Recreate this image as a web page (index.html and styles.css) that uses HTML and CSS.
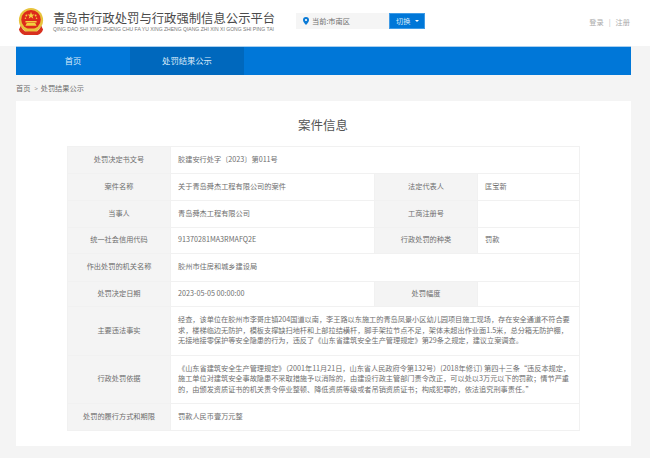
FILE: index.html
```html
<!DOCTYPE html>
<html lang="zh-CN">
<head>
<meta charset="utf-8">
<title>案件信息</title>
<link rel="stylesheet" href="styles.css">
</head>
<body>
<header class="header">
  <div class="brand">
    <svg class="emblem" viewBox="0 0 28 30" width="26" height="28">
      <circle cx="14" cy="13" r="13" fill="#e8c33c"/>
      <circle cx="14" cy="12.5" r="10.5" fill="#dd2a1b"/>
      <path d="M14 4l1 2.8h3l-2.4 1.8.9 2.9L14 9.7l-2.500 1.800.9-2.900L10 6.800h3z" fill="#f3d13f"/>
      <circle cx="9" cy="8" r="1" fill="#f3d13f"/><circle cx="19" cy="8" r="1" fill="#f3d13f"/>
      <circle cx="8" cy="11" r=".8" fill="#f3d13f"/><circle cx="20" cy="11" r=".8" fill="#f3d13f"/>
      <path d="M8 14h12v1.500H8zM9.500 16h9l1.500 3H8z" fill="#f3d13f"/>
      <path d="M3 19c1 3 3 5 5 6h12c2-1 4-3 5-6l2 4c-1 3-3 5-6 6H7c-3-1-5-3-6-6z" fill="#d8301f"/>
      <path d="M7 22h14v3H7z" fill="#e8c33c"/>
    </svg>
    <div class="brand-text">
      <div class="brand-name">青岛市行政处罚与行政强制信息公示平台</div>
      <div class="brand-pinyin">QING DAO SHI XING ZHENG CHU FA YU XING ZHENG QIANG ZHI XIN XI GONG SHI PING TAI</div>
    </div>
  </div>
  <div class="region">
    <div class="region-box">
      <svg class="pin" viewBox="0 0 6 8" width="6" height="8"><path d="M3 0a3 3 0 0 1 3 3c0 2-3 5-3 5S0 5 0 3a3 3 0 0 1 3-3z" fill="#0a7ad6"/><circle cx="3" cy="3" r="1.100" fill="#fff"/></svg>
      <span>当前:市南区</span>
    </div>
    <button class="switch">切换<i class="caret"></i></button>
  </div>
  <div class="auth"><span>登录</span><i class="sep">|</i><span>注册</span></div>
</header>
<nav class="nav">
  <a class="nav-item">首页</a>
  <a class="nav-item active">处罚结果公示</a>
</nav>
<div class="crumb"><span>首页</span><span class="gt">&gt;</span><span>处罚结果公示</span></div>
<main class="card">
  <h1 class="title">案件信息</h1>
  <table class="info">
    <colgroup><col class="c1"><col class="c2"><col class="c3"><col class="c4"></colgroup>
    <tr class="r27"><th>处罚决定书文号</th><td colspan="3">胶建安行处字〔2023〕第011号</td></tr>
    <tr class="r27"><th>案件名称</th><td>关于青岛舜杰工程有限公司的案件</td><th>法定代表人</th><td>匡宝新</td></tr>
    <tr class="r27"><th>当事人</th><td>青岛舜杰工程有限公司</td><th>工商注册号</th><td></td></tr>
    <tr class="r26"><th>统一社会信用代码</th><td>91370281MA3RMAFQ2E</td><th>行政处罚的种类</th><td>罚款</td></tr>
    <tr class="r28"><th>作出处罚的机关名称</th><td colspan="3">胶州市住房和城乡建设局</td></tr>
    <tr class="r25"><th>处罚决定日期</th><td>2023-05-05 00:00:00</td><th>处罚幅度</th><td></td></tr>
    <tr class="r49"><th>主要违法事实</th><td colspan="3" class="long">经查，该单位在胶州市李哥庄镇204国道以南，李王路以东施工的青岛凤景小区幼儿园项目施工现场，存在安全通道不符合要<br>求，楼梯临边无防护，模板支撑缺扫地杆和上部拉结横杆，脚手架拉节点不足，架体未超出作业面1.5米，总分箱无防护棚，<br>无接地接零保护等安全隐患的行为，违反了《山东省建筑安全生产管理规定》第29条之规定，建议立案调查。</td></tr>
    <tr class="r48"><th>行政处罚依据</th><td colspan="3" class="long">《山东省建筑安全生产管理规定》（2001年11月21日，山东省人民政府令第132号）(2018年修订) 第四十三条“违反本规定，<br>施工单位对建筑安全事故隐患不采取措施予以消除的，由建设行政主管部门责令改正，可以处以3万元以下的罚款；情节严重<br>的，由颁发资质证书的机关责令停业整顿、降低资质等级或者吊销资质证书；构成犯罪的，依法追究刑事责任。”</td></tr>
    <tr class="r27"><th>处罚的履行方式和期限</th><td colspan="3">罚款人民币壹万元整</td></tr>
  </table>
</main>
</body>
</html>
```
FILE: styles.css
```css
* { box-sizing: border-box; }
html, body { margin: 0; padding: 0; }
body {
  width: 650px;
  height: 458px;
  overflow: hidden;
  background: #f4f4f4;
  font-family: "Noto Sans CJK SC", "Liberation Sans", sans-serif;
  color: #6e6e6e;
}
.header {
  height: 46px;
  background: #fff;
  display: flex;
  align-items: flex-start;
  padding: 0 20px 0 18px;
}
.brand { display: flex; align-items: center; gap: 9px; width: 278px; padding-top: 8px; }
.emblem { flex: none; }
.brand-name { font-size: 12.35px; line-height: 15px; color: #4a4a4a; white-space: nowrap; }
.brand-pinyin { font-size: 5.05px; line-height: 7px; color: #777; white-space: nowrap; font-family: "Liberation Sans", sans-serif; }
.region { display: flex; margin-top: 13px; }
.region-box {
  width: 93px; height: 16px; background: #f5f5f5;
  display: flex; align-items: center; gap: 3px; padding-left: 7px;
  font-size: 7.2px; color: #6e6e6e;
}
.switch {
  width: 36px; height: 16px; padding: 0 0 0 6px; margin: 0;
  background: #0077d8; border: 1px solid #3f9be6; color: #dcecfa;
  font-family: inherit; font-size: 7.2px; line-height: 14px;
  display: flex; align-items: center; gap: 5px;
}
.caret { width: 0; height: 0; border: 2px solid transparent; border-top: 2px solid #fff; border-bottom: 0; }
.auth { display: flex; margin-left: auto; margin-top: 17px; font-size: 7.2px; line-height: 10px; color: #aaa; gap: 5px; }
.sep { font-style: normal; color: #bbb; }
.nav {
  margin: 0 19px 0 16px; height: 29px;
  background: #0077d8; border-top: 1px solid #a9cfef;
  display: flex;
}
.nav-item { width: 114px; text-align: center; color: #dcecfa; font-size: 8.3px; line-height: 27px; }
.nav-item.active { background: #0068bd; }
.crumb {
  margin-left: 16px; height: 26px; display: flex; align-items: center; gap: 3px;
  font-size: 7.2px; color: #6e6e6e;
}
.gt { margin-left: 1px; color: #888; font-size: 6px; }
.card {
  margin: 0 19px 0 16px; height: 345px; background: #fff;
  padding: 0 52px 0 51px;
}
.title {
  margin: 0; height: 45px; padding-top: 15px; text-align: center;
  font-size: 12.5px; line-height: 18px; font-weight: 400; color: #555;
}
.info { width: 512px; border-collapse: collapse; table-layout: fixed; font-size: 7.2px; line-height: 10.5px; }
.c1 { width: 103px; } .c2 { width: 204px; } .c3 { width: 103px; } .c4 { width: 102px; }
.info th, .info td { border: 1px solid #f1f1f1; padding: 0 7px 2px; }
.info th { background: #f4f4f4; font-weight: 400; text-align: center; color: #6e6e6e; padding: 0 2px 2px; }
.info td { color: #6e6e6e; }
.info td.long { white-space: nowrap; letter-spacing: -0.02px; }
.r25 { height: 25px; }
.r26 { height: 26px; }
.r27 { height: 27px; }
.r28 { height: 28px; }
.r48 { height: 48px; }
.r49 { height: 49px; }
```
